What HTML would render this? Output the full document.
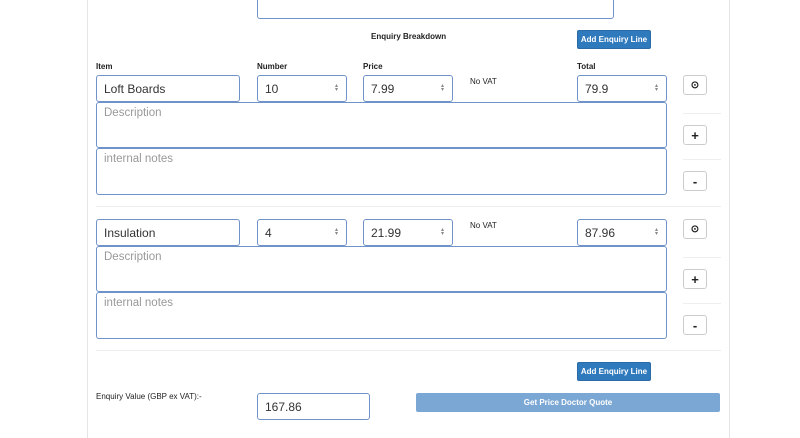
<!DOCTYPE html>
<html><head><style>
body{margin:0;width:800px;height:427px;background:#fff;font-family:"Liberation Sans",sans-serif;position:relative;overflow:hidden;color:#333}
.a{position:absolute;box-sizing:border-box}
.panel{left:87px;top:-2px;width:643px;height:440px;border-left:1px solid #e5e5e5;border-right:1px solid #e5e5e5}
.inp{border:1.5px solid #6f93c9;border-radius:3px;background:#fff;font-size:12px;color:#333;padding:0 7px;display:flex;align-items:center}
.ta{border:1.5px solid #6f93c9;border-radius:3px;font-size:11.5px;color:#999;padding:4px 7px}
.lbl{font-size:8px;font-weight:bold;color:#222}
.btn{background:#2f79bd;color:#fff;font-size:8px;font-weight:bold;border-radius:2px;display:flex;align-items:center;justify-content:center;border:1px solid #2a6aa6}
.sb{border:1px solid #ccc;border-radius:3px;background:#fff;font-size:13px;font-weight:bold;display:flex;align-items:center;justify-content:center;color:#222}
.sp{position:absolute;right:8px;top:8px;font-size:6px;color:#888;line-height:4px}
.hr{height:1px;background:#eee}
</style></head><body>
<div class="a panel"></div>
<div class="a ta" style="left:257px;top:-10px;width:357px;height:29px"></div>
<div class="a lbl" style="left:371px;top:32px">Enquiry Breakdown</div>
<div class="a btn" style="left:577px;top:30px;width:74px;height:19px">Add Enquiry Line</div>

<div class="a lbl" style="left:96px;top:62px">Item</div>
<div class="a lbl" style="left:257px;top:62px">Number</div>
<div class="a lbl" style="left:363px;top:62px">Price</div>
<div class="a lbl" style="left:577px;top:62px">Total</div>

<div class="a inp" style="left:96px;top:75px;width:144px;height:27px">Loft Boards</div>
<div class="a inp" style="left:257px;top:75px;width:90px;height:27px">10<span class="sp">▴<br>▾</span></div>
<div class="a inp" style="left:363px;top:75px;width:90px;height:27px">7.99<span class="sp">▴<br>▾</span></div>
<div class="a" style="left:470px;top:77px;font-size:8px;color:#222">No VAT</div>
<div class="a inp" style="left:577px;top:75px;width:90px;height:27px">79.9<span class="sp">▴<br>▾</span></div>
<div class="a ta" style="left:96px;top:102px;width:571px;height:46px">Description</div>
<div class="a ta" style="left:96px;top:148px;width:571px;height:47px">internal notes</div>
<div class="a sb" style="left:683px;top:75px;width:24px;height:20px;font-size:10px">⊙</div>
<div class="a hr" style="left:683px;top:113px;width:38px"></div>
<div class="a sb" style="left:683px;top:125px;width:24px;height:20px">+</div>
<div class="a hr" style="left:683px;top:159px;width:38px"></div>
<div class="a sb" style="left:683px;top:171px;width:24px;height:20px">-</div>
<div class="a hr" style="left:96px;top:206px;width:625px"></div>

<div class="a inp" style="left:96px;top:219px;width:144px;height:27px">Insulation</div>
<div class="a inp" style="left:257px;top:219px;width:90px;height:27px">4<span class="sp">▴<br>▾</span></div>
<div class="a inp" style="left:363px;top:219px;width:90px;height:27px">21.99<span class="sp">▴<br>▾</span></div>
<div class="a" style="left:470px;top:221px;font-size:8px;color:#222">No VAT</div>
<div class="a inp" style="left:577px;top:219px;width:90px;height:27px">87.96<span class="sp">▴<br>▾</span></div>
<div class="a ta" style="left:96px;top:246px;width:571px;height:46px">Description</div>
<div class="a ta" style="left:96px;top:292px;width:571px;height:47px">internal notes</div>
<div class="a sb" style="left:683px;top:219px;width:24px;height:20px;font-size:10px">⊙</div>
<div class="a hr" style="left:683px;top:257px;width:38px"></div>
<div class="a sb" style="left:683px;top:269px;width:24px;height:20px">+</div>
<div class="a hr" style="left:683px;top:303px;width:38px"></div>
<div class="a sb" style="left:683px;top:315px;width:24px;height:20px">-</div>
<div class="a hr" style="left:96px;top:350px;width:625px"></div>

<div class="a btn" style="left:577px;top:362px;width:74px;height:19px">Add Enquiry Line</div>
<div class="a" style="left:96px;top:392px;font-size:8px;color:#222">Enquiry Value (GBP ex VAT):-</div>
<div class="a inp" style="left:257px;top:393px;width:113px;height:27px">167.86</div>
<div class="a btn" style="left:416px;top:393px;width:304px;height:19px;background:#7ba7d4;border-color:#7ba7d4">Get Price Doctor Quote</div>
</body></html>
